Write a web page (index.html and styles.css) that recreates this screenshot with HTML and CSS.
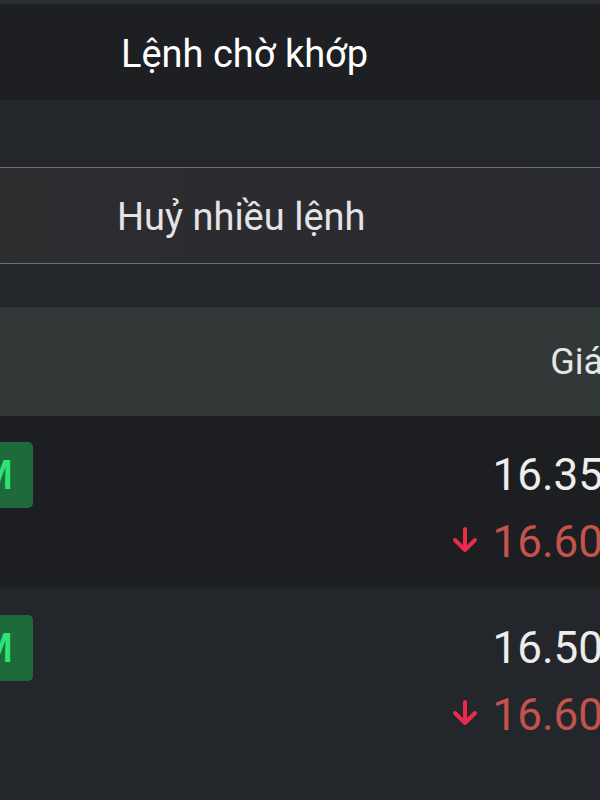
FILE: index.html
```html
<!DOCTYPE html>
<html lang="vi">
<head>
    <meta charset="UTF-8">
    <meta name="viewport" content="width=device-width, initial-scale=1.0">
    <title>Lệnh chờ khớp</title>
    <link rel="stylesheet" href="styles.css">
</head>
<body>
    <div class="top-strip"></div>
    <div class="title-bar">Lệnh chờ khớp</div>

    <div class="spacer-top"></div>
    <div class="cancel-btn">Huỷ nhiều lệnh</div>
    <div class="spacer-bottom"></div>

    <div class="order-table">
        <div class="thead">
            <div class="th-price">Giá</div>
        </div>

        <div class="order-row">
            <div class="badge">M</div>
            <div class="price-cell">
                <div class="price">16.35</div>
                <div class="ref-price">
                    <svg class="arrow" viewBox="0 0 26 26" width="26" height="26">
                        <path d="M13 2 V23 M3 13 L13 23 L23 13" fill="none" stroke="#ee2a4c" stroke-width="4" stroke-linecap="round" stroke-linejoin="round"/>
                    </svg>
                    16.60
                </div>
            </div>
        </div>

        <div class="order-row alt">
            <div class="badge">M</div>
            <div class="price-cell">
                <div class="price">16.50</div>
                <div class="ref-price">
                    <svg class="arrow" viewBox="0 0 26 26" width="26" height="26">
                        <path d="M13 2 V23 M3 13 L13 23 L23 13" fill="none" stroke="#ee2a4c" stroke-width="4" stroke-linecap="round" stroke-linejoin="round"/>
                    </svg>
                    16.60
                </div>
            </div>
        </div>
    </div>
</body>
</html>
```

FILE: styles.css
```css
body {
    margin: 0;
    padding: 0;
    width: 600px;
    height: 800px;
    overflow: hidden;
    background: #23272b;
    font-family: Roboto, "Noto Sans", sans-serif;
    color: #f2f2f2;
}

.top-strip {
    height: 4px;
    background: #2a2e32;
}

.title-bar {
    height: 92px;
    display: flex;
    align-items: center;
    padding: 4px 0 0 121px;
    background: #1d1f22;
    font-size: 38px;
    color: #ffffff;
}

.spacer-top {
    height: 67px;
}

.cancel-btn {
    height: 92px;
    display: flex;
    align-items: center;
    padding: 3px 0 0 117px;
    border-top: 1px solid #6c6f73;
    border-bottom: 1px solid #6c6f73;
    background: linear-gradient(90deg, #2d2c2f, #2a2a31);
    font-size: 38px;
    color: #e4e4e6;
}

.spacer-bottom {
    height: 43px;
}

.order-table {
    width: 665px;
    margin-left: -42px;
}

.thead {
    height: 109px;
    display: flex;
    align-items: center;
    justify-content: flex-end;
    padding-right: 20px;
    background: #323738;
}

.th-price {
    font-size: 36px;
    color: #e6e6e6;
}

.order-row {
    height: 171px;
    box-sizing: border-box;
    display: flex;
    justify-content: space-between;
    align-items: flex-start;
    padding: 26px 20px 0 0;
    background: #1c1e21;
}

.order-row.alt {
    background: #23272b;
    border-top: 2px solid #202326;
}

.badge {
    width: 75px;
    height: 66px;
    display: flex;
    align-items: center;
    justify-content: center;
    border-radius: 5px;
    background: #1f6a3b;
    color: #2ee374;
    font-size: 40px;
    font-weight: 500;
}

.price-cell {
    display: flex;
    flex-direction: column;
    align-items: flex-end;
    gap: 15px;
    padding-top: 7px;
}

.price {
    font-size: 44px;
    line-height: 52px;
    color: #ededed;
}

.ref-price {
    display: flex;
    align-items: center;
    gap: 14px;
    font-size: 44px;
    line-height: 52px;
    color: #c4534c;
}

.arrow {
    margin-top: -4px;
}
```
